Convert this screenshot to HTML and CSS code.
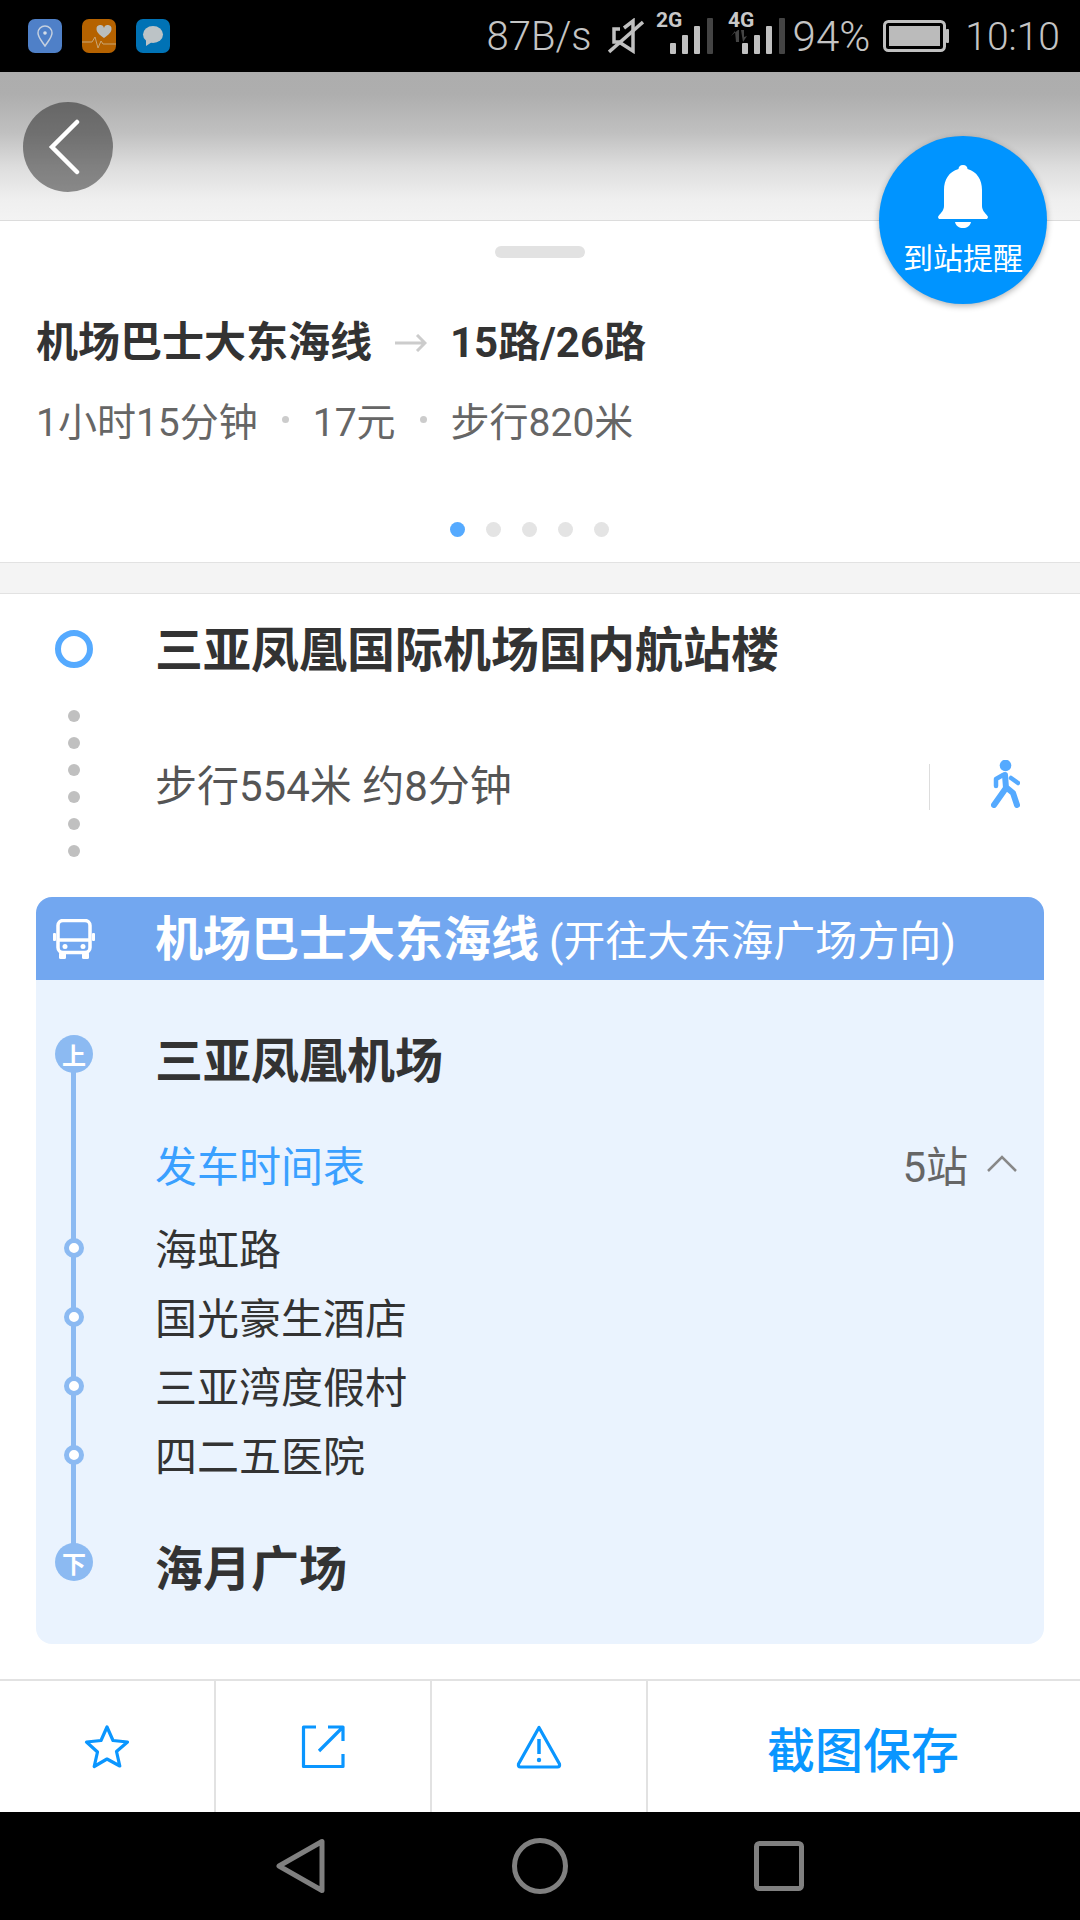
FILE: index.html
```html
<!DOCTYPE html>
<html lang="zh-CN">
<head>
    <meta charset="UTF-8">
    <meta name="viewport" content="width=device-width, initial-scale=1.0">
    <title>公交路线详情</title>
    <link rel="stylesheet" href="styles.css">
</head>
<body>
    <div class="status-bar">
        <div class="app-icon app-map">
            <svg width="34" height="34" viewBox="0 0 34 34"><path d="M17 27c-4-6-7-9-7-13a7 7 0 0 1 14 0c0 4-3 7-7 13z" fill="none" stroke="#c4cfdf" stroke-width="1.5"/><circle cx="17" cy="14" r="1.8" fill="#d5dde8"/></svg>
        </div>
        <div class="app-icon app-health">
            <svg width="34" height="34" viewBox="0 0 34 34"><path d="M22 19c-5-3.500-7.500-6-7.500-9a3.800 3.800 0 0 1 7.500-1 3.800 3.800 0 0 1 7.500 1c0 3-2.500 5.500-7.500 9z" fill="#b9bdbd"/><path d="M0 23h10l3-5 3 11 3-7 2 3h13" fill="none" stroke="#c9a675" stroke-width="1"/></svg>
        </div>
        <div class="app-icon app-chat">
            <svg width="34" height="34" viewBox="0 0 34 34"><ellipse cx="17" cy="15.500" rx="10" ry="8.500" fill="#bcc3c6"/><path d="M10 20v7l6-4z" fill="#bcc3c6"/></svg>
        </div>

        <div class="status-right">
            <span class="status-text speed">87B/s</span>
            <svg class="mute" width="36" height="36" viewBox="0 0 36 36"><path d="M12 11H6v13h5l14 9V3l-9 7" fill="none" stroke="#c0c0c0" stroke-width="3.500"/><path d="M1 34L35 4" stroke="#c0c0c0" stroke-width="3.500"/></svg>
            <svg class="signal" width="57" height="60" viewBox="0 0 57 60">
                <text x="0" y="21" class="net-label">2G</text>
                <rect x="14" y="37" width="6" height="11" rx="1" fill="#c0c0c0"/>
                <rect x="26" y="29" width="6" height="19" rx="1" fill="#c0c0c0"/>
                <rect x="38" y="20" width="6" height="28" rx="1" fill="#c0c0c0"/>
                <rect x="51" y="12" width="6" height="36" rx="1" fill="#444"/>
            </svg>
            <svg class="signal signal-4g" width="57" height="60" viewBox="0 0 57 60">
                <text x="0" y="21" class="net-label">4G</text>
                <path d="M3 30l4-5 1 11h3V24h-1zM13 24h3v7l3-1-4 6z" fill="#444"/>
                <rect x="14" y="37" width="6" height="11" rx="1" fill="#c0c0c0"/>
                <rect x="26" y="29" width="6" height="19" rx="1" fill="#c0c0c0"/>
                <rect x="38" y="20" width="6" height="28" rx="1" fill="#c0c0c0"/>
                <rect x="51" y="12" width="6" height="36" rx="1" fill="#444"/>
            </svg>
            <span class="status-text percent">94%</span>
            <svg class="battery" width="66" height="32" viewBox="0 0 66 32"><rect x="1.500" y="1.500" width="60" height="29" rx="4" fill="none" stroke="#c0c0c0" stroke-width="3"/><rect x="6" y="6" width="51" height="20" fill="#bbb"/><rect x="63" y="9" width="3" height="14" rx="1" fill="#c0c0c0"/></svg>
            <span class="status-text time">10:10</span>
        </div>
    </div>

    <header class="map-header">
        <div class="back-btn">
            <svg width="32" height="56" viewBox="0 0 32 56"><path d="M29 3L4 28l25 25" fill="none" stroke="#fff" stroke-width="4.500" stroke-linecap="round"/></svg>
        </div>
        <div class="remind-btn">
            <svg width="50" height="64" viewBox="0 0 50 64"><path d="M25 0c-3 0-4.500 2-4.500 4C11 6.500 6 15 6 25v16c0 4-3 7-5.500 10-1 1.500 0 3 1.500 3h46c1.500 0 2.500-1.500 1.500-3C47 48 44 45 44 41V25C44 15 39 6.500 29.500 4 29.500 2 28 0 25 0z" fill="#fff"/><path d="M17 57h16c-1 4-4 6-8 6s-7-2-8-6z" fill="#fff"/></svg>
            <span>到站提醒</span>
        </div>
    </header>

    <section class="summary">
        <div class="handle"></div>
        <div class="summary-title">
            <span>机场巴士大东海线</span>
            <svg width="32" height="18" viewBox="0 0 32 18"><path d="M0 9h30M22 1l8 8-8 8" fill="none" stroke="#ccc" stroke-width="3"/></svg>
            <span>15路/26路</span>
        </div>
        <div class="summary-meta">
            <span>1小时15分钟</span>
            <i class="meta-dot"></i>
            <span>17元</span>
            <i class="meta-dot"></i>
            <span>步行820米</span>
        </div>
        <div class="pager">
            <i class="active"></i><i></i><i></i><i></i><i></i>
        </div>
    </section>

    <div class="band"></div>

    <section class="origin">
        <div class="marker"><i class="origin-ring"></i></div>
        <h2 class="stop-name">三亚凤凰国际机场国内航站楼</h2>
    </section>

    <section class="walk">
        <div class="marker walk-dots">
            <i></i><i></i><i></i><i></i><i></i><i></i>
        </div>
        <div class="walk-row">
            <span class="walk-text">步行554米 约8分钟</span>
            <i class="walk-divider"></i>
            <svg class="walk-icon" width="29" height="48" viewBox="0 0 29 48">
                <circle cx="14.500" cy="5.500" r="5.800" fill="#55aaff"/>
                <path d="M14 15l1 13M15 28L3 45M16 28l6 5 4 12" fill="none" stroke="#55aaff" stroke-width="6" stroke-linecap="round" stroke-linejoin="round"/>
                <path d="M12 15l-7 4v7M20 18l7 5" fill="none" stroke="#55aaff" stroke-width="4.500" stroke-linecap="round" stroke-linejoin="round"/>
            </svg>
        </div>
    </section>

    <section class="line-card">
        <div class="line-head">
            <div class="marker">
                <svg width="42" height="40" viewBox="0 0 42 40"><rect x="5" y="1.500" width="32" height="32" rx="5" fill="none" stroke="#fff" stroke-width="3.500"/><path d="M5 21h32" stroke="#fff" stroke-width="3.500"/><circle cx="12" cy="27.500" r="2.500" fill="#fff"/><circle cx="30" cy="27.500" r="2.500" fill="#fff"/><rect x="6" y="33" width="7" height="7" rx="1.500" fill="#fff"/><rect x="29" y="33" width="7" height="7" rx="1.500" fill="#fff"/><rect x="0" y="14" width="3" height="8" rx="1" fill="#fff"/><rect x="39" y="14" width="3" height="8" rx="1" fill="#fff"/></svg>
            </div>
            <div class="line-name">
                <strong>机场巴士大东海线</strong>
                <span>(开往大东海广场方向)</span>
            </div>
        </div>
        <div class="line-body">
            <div class="rail"></div>

            <div class="stop stop-main">
                <div class="marker"><i class="badge">上</i></div>
                <span class="stop-name">三亚凤凰机场</span>
            </div>

            <div class="stop timetable">
                <div class="marker"></div>
                <span class="timetable-link">发车时间表</span>
                <span class="stop-count">5站</span>
                <svg width="30" height="17" viewBox="0 0 30 17"><path d="M1 16L15 2l14 14" fill="none" stroke="#888" stroke-width="2.500"/></svg>
            </div>

            <div class="stop stop-small first-small">
                <div class="marker"><i class="stop-dot"></i></div>
                <span>海虹路</span>
            </div>
            <div class="stop stop-small">
                <div class="marker"><i class="stop-dot"></i></div>
                <span>国光豪生酒店</span>
            </div>
            <div class="stop stop-small">
                <div class="marker"><i class="stop-dot"></i></div>
                <span>三亚湾度假村</span>
            </div>
            <div class="stop stop-small">
                <div class="marker"><i class="stop-dot"></i></div>
                <span>四二五医院</span>
            </div>

            <div class="stop stop-main last-stop">
                <div class="marker"><i class="badge">下</i></div>
                <span class="stop-name">海月广场</span>
            </div>
        </div>
    </section>

    <footer class="toolbar">
        <div class="tool">
            <svg width="46" height="46" viewBox="0 0 46 46"><path d="M23 3l6 13.500 14.500 1.500-11 9.500 3.300 14.500L23 35l-12.800 7.500L13.500 28 2.500 18 17 16.500z" fill="none" stroke="#0a96ff" stroke-width="3.200" stroke-linejoin="round"/></svg>
        </div>
        <div class="tool">
            <svg width="44" height="44" viewBox="0 0 44 44"><path d="M15 2H2.500v39.500H42V29M27 2h15v14M41 3L18 26" fill="none" stroke="#0a96ff" stroke-width="3.200" stroke-linejoin="round"/></svg>
        </div>
        <div class="tool">
            <svg width="46" height="44" viewBox="0 0 46 44"><path d="M23 2.500L2.500 39q-.5 3 2 3h37q2.500 0 2-3z" fill="none" stroke="#0a96ff" stroke-width="3.200" stroke-linejoin="round"/><path d="M23 14v15" stroke="#0a96ff" stroke-width="3.500"/><circle cx="23" cy="35" r="2.200" fill="#0a96ff"/></svg>
        </div>
        <div class="tool tool-save">截图保存</div>
    </footer>

    <nav class="nav-bar">
        <svg width="50" height="56" viewBox="0 0 50 56"><path d="M46 3.500v49L3 28z" fill="none" stroke="#808080" stroke-width="5" stroke-linejoin="round"/></svg>
        <svg width="56" height="56" viewBox="0 0 56 56"><circle cx="28" cy="28" r="25.500" fill="none" stroke="#808080" stroke-width="5"/></svg>
        <svg width="50" height="50" viewBox="0 0 50 50"><rect x="2.500" y="2.500" width="45" height="45" rx="3" fill="none" stroke="#808080" stroke-width="5"/></svg>
    </nav>
</body>
</html>
```

FILE: styles.css
```css
* {
    box-sizing: border-box;
}

body {
    margin: 0;
    width: 1080px;
    height: 1920px;
    overflow: hidden;
    background-color: #fff;
    color: #333;
    font-family: Roboto, "Noto Sans CJK SC", sans-serif;
}

i {
    display: block;
}

/* status bar */
.status-bar {
    display: flex;
    align-items: center;
    height: 72px;
    padding: 0 20px 0 28px;
    background-color: #000;
}

.app-icon {
    width: 34px;
    height: 34px;
    margin-right: 20px;
    border-radius: 7px;
    overflow: hidden;
}

.app-icon svg {
    display: block;
}

.app-map {
    background-color: #4f80c8;
}

.app-health {
    background-color: #b56200;
}

.app-chat {
    background-color: #0072b5;
}

.status-right {
    display: flex;
    align-items: center;
    margin-left: auto;
}

.status-text {
    padding-top: 2px;
    color: #c4c4c4;
    font-size: 39px;
    font-weight: 300;
    line-height: 70px;
}

.speed {
    font-size: 40px;
}

.mute {
    margin-left: 16px;
}

.signal {
    margin-left: 12px;
}

.signal-4g {
    margin-left: 15px;
}

.net-label {
    fill: #c8c8c8;
    font-family: Roboto, sans-serif;
    font-size: 21px;
    font-weight: 700;
}

.percent {
    margin-left: 8px;
    font-size: 42px;
}

.battery {
    margin-left: 13px;
}

.time {
    margin-left: 16px;
}

/* map header */
.map-header {
    position: relative;
    z-index: 2;
    height: 149px;
    padding: 30px 0 0 23px;
    border-bottom: 1px solid #dcdcdc;
    background: linear-gradient(#adadad 0%, #aeaeae 15%, #c0c0c0 41%, #dddddd 64%, #efefef 86%, #f3f3f3 100%);
}

.back-btn {
    display: flex;
    align-items: center;
    justify-content: center;
    width: 90px;
    height: 90px;
    padding-right: 8px;
    border-radius: 50%;
    background-color: rgba(0, 0, 0, 0.42);
}

.remind-btn {
    position: absolute;
    top: 64px;
    right: 33px;
    display: flex;
    flex-direction: column;
    align-items: center;
    width: 168px;
    height: 168px;
    padding-top: 29px;
    border-radius: 50%;
    background-color: #0094ff;
    box-shadow: 0 2px 6px rgba(0, 0, 0, 0.3);
    color: #fff;
    font-family: "Noto Sans CJK SC", sans-serif;
    font-size: 30px;
    line-height: 40px;
}

.remind-btn svg {
    flex-shrink: 0;
    margin-bottom: 7px;
}

/* route summary */
.summary {
    height: 341px;
    padding: 25px 36px 0;
}

.handle {
    width: 90px;
    height: 12px;
    margin: 0 auto 57px;
    border-radius: 6px;
    background-color: #e2e2e2;
}

.summary-title {
    display: flex;
    align-items: center;
    gap: 23px;
    height: 56px;
    font-size: 42px;
    font-weight: 700;
    line-height: 56px;
}

.summary-meta {
    display: flex;
    align-items: center;
    gap: 24px;
    height: 50px;
    margin-top: 27px;
    color: #666;
    font-size: 39px;
    line-height: 50px;
}

.meta-dot {
    width: 7px;
    height: 7px;
    margin-bottom: 8px;
    border-radius: 50%;
    background-color: #ccc;
}

.pager {
    display: flex;
    gap: 21px;
    margin-top: 74px;
    padding-left: 414px;
}

.pager i {
    width: 15px;
    height: 15px;
    border-radius: 50%;
    background-color: #e4e4e4;
}

.pager i.active {
    background-color: #55aaff;
}

.band {
    height: 32px;
    border-top: 1px solid #e2e2e2;
    border-bottom: 1px solid #e2e2e2;
    background-color: #f4f4f4;
}

/* shared timeline bits */
.marker {
    position: relative;
    display: flex;
    flex-shrink: 0;
    align-items: center;
    justify-content: center;
    width: 76px;
    margin-right: 43px;
}

.stop-name {
    margin: 0;
    font-size: 48px;
    font-weight: 700;
    line-height: 60px;
}

/* origin and walk */
.origin {
    display: flex;
    align-items: center;
    height: 85px;
    margin-left: 36px;
    padding-top: 25px;
}

.origin .stop-name {
    margin-top: 3px;
}

.origin-ring {
    width: 38px;
    height: 38px;
    border: 6px solid #55aaff;
    border-radius: 50%;
}

.walk {
    display: flex;
    align-items: flex-start;
    height: 218px;
    margin-left: 36px;
    padding-top: 31px;
}

.walk-dots {
    flex-direction: column;
    gap: 15px;
}

.walk-dots i {
    width: 12px;
    height: 12px;
    border-radius: 50%;
    background-color: #c0c0c0;
}

.walk-row {
    display: flex;
    flex: 1;
    align-items: center;
    height: 60px;
    margin-top: 47px;
    padding-right: 60px;
}

.walk-text {
    flex: 1;
    color: #555;
    font-size: 42px;
    line-height: 60px;
}

.walk-divider {
    width: 1px;
    height: 46px;
    margin-right: 61px;
    background-color: #ddd;
}

.walk-icon {
    margin-bottom: 7px;
}

/* line card */
.line-card {
    margin: 0 36px;
}

.line-head {
    display: flex;
    align-items: center;
    height: 83px;
    border-radius: 16px 16px 0 0;
    background-color: #72a7f0;
    color: #fff;
}

.line-name {
    padding-top: 4px;
}

.line-name strong {
    font-size: 48px;
    font-weight: 700;
    line-height: 83px;
}

.line-name span {
    margin-left: 6px;
    font-size: 42px;
    line-height: 83px;
}

.line-body {
    position: relative;
    height: 664px;
    padding-top: 52px;
    border-radius: 0 0 16px 16px;
    background-color: #eaf3fe;
}

.rail {
    position: absolute;
    top: 74px;
    left: 35px;
    width: 5px;
    height: 509px;
    background-color: #8cbaf2;
}

.stop {
    display: flex;
    align-items: center;
}

.stop-main {
    height: 60px;
}

.badge {
    display: flex;
    align-items: center;
    justify-content: center;
    width: 38px;
    height: 38px;
    margin-bottom: 16px;
    border-radius: 50%;
    background-color: #8cbaf2;
    color: #fff;
    font-size: 24px;
    font-style: normal;
    font-weight: 700;
}

.timetable {
    height: 60px;
    margin-top: 41px;
    padding-right: 27px;
    font-size: 42px;
}

.timetable-link {
    flex: 1;
    color: #3aa0ff;
}

.stop-count {
    margin-right: 19px;
    color: #666;
    font-size: 42px;
}

.first-small {
    margin-top: 19px;
}

.stop-small {
    height: 69px;
    color: #333;
    font-size: 42px;
}

.stop-dot {
    width: 20px;
    height: 20px;
    margin-top: 2px;
    border: 5px solid #8cbaf2;
    border-radius: 50%;
    background-color: #fff;
}

.last-stop {
    margin-top: 52px;
}

/* bottom toolbar */
.toolbar {
    display: flex;
    height: 133px;
    margin-top: 35px;
    border-top: 2px solid #e2e2e2;
}

.tool {
    display: flex;
    align-items: center;
    justify-content: center;
    width: 216px;
    border-right: 2px solid #e2e2e2;
}

.tool-save {
    flex: 1;
    padding-right: 2px;
    border-right: none;
    color: #0a96ff;
    font-size: 48px;
    font-weight: 500;
}

/* android nav */
.nav-bar {
    display: flex;
    align-items: center;
    justify-content: center;
    gap: 186px;
    height: 108px;
    background-color: #000;
}
```
